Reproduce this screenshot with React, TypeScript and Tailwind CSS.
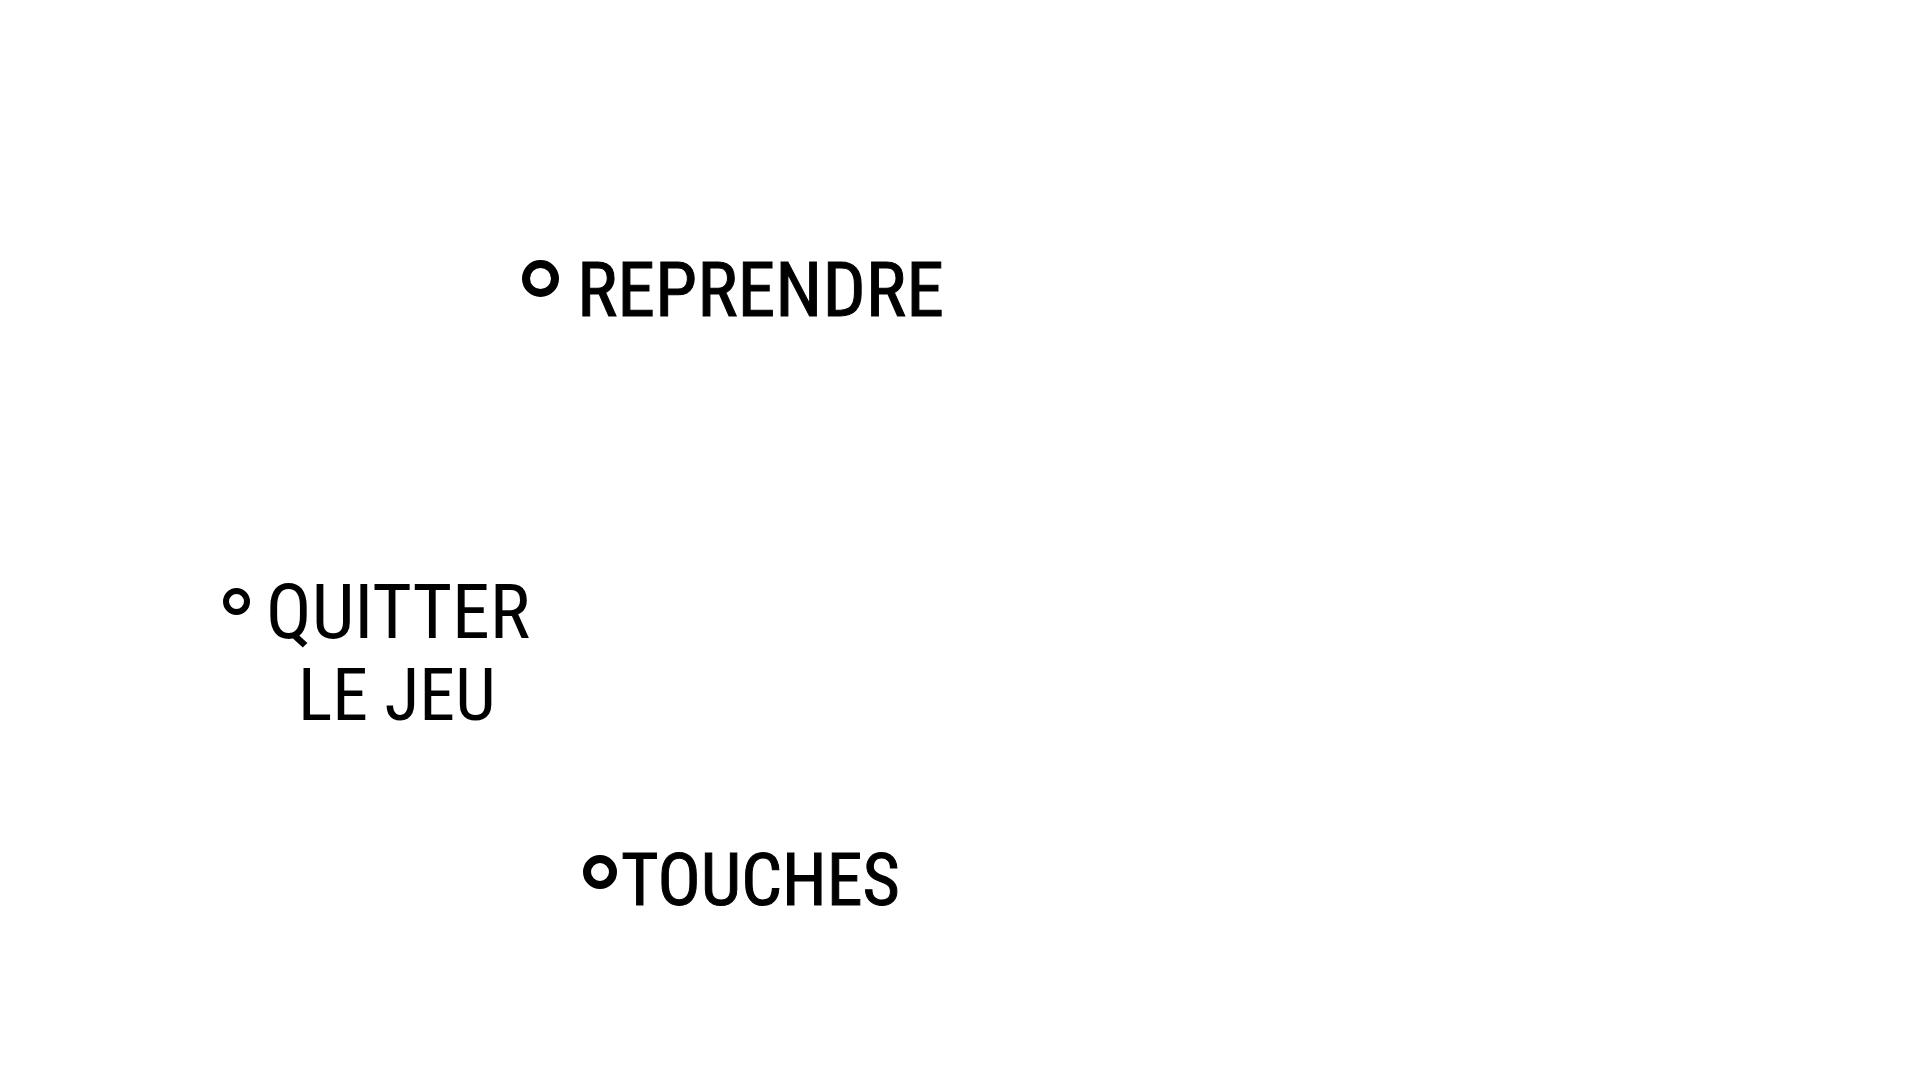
type RingProps = { size: number; stroke: number; className: string };

function Ring({ size, stroke, className }: RingProps) {
  return (
    <svg width={size} height={size} viewBox={`0 0 ${size} ${size}`} className={className} aria-hidden="true">
      <circle
        cx={size / 2}
        cy={size / 2}
        r={(size - stroke) / 2}
        fill="none"
        stroke="currentColor"
        strokeWidth={stroke}
      />
    </svg>
  );
}

export default function App() {
  return (
    <main className="min-h-screen bg-white text-black">
      <nav
        aria-label="Menu pause"
        className="flex flex-col items-start pt-[252px] font-['Roboto_Condensed','Roboto',sans-serif] text-[76px] leading-none whitespace-nowrap"
      >
        <button type="button" className="ml-[522px] flex cursor-pointer items-start gap-[18px]">
          <Ring size={37} stroke={8} className="mt-2 shrink-0" />
          <span className="[-webkit-text-stroke:1px_black]">REPRENDRE</span>
        </button>

        <button type="button" className="mt-[246px] ml-[223px] flex cursor-pointer items-start gap-4">
          <Ring size={27} stroke={6} className="mt-[14px] shrink-0" />
          <span className="flex flex-col items-start gap-[10px]">
            <span>QUITTER</span>
            <span className="ml-8 text-[72px]">LE JEU</span>
          </span>
        </button>

        <button type="button" className="mt-[113px] ml-[583px] flex cursor-pointer items-start gap-1 text-[72px]">
          <Ring size={34} stroke={8} className="mt-[10px] shrink-0" />
          <span className="[-webkit-text-stroke:1px_black]">TOUCHES</span>
        </button>
      </nav>
    </main>
  );
}
